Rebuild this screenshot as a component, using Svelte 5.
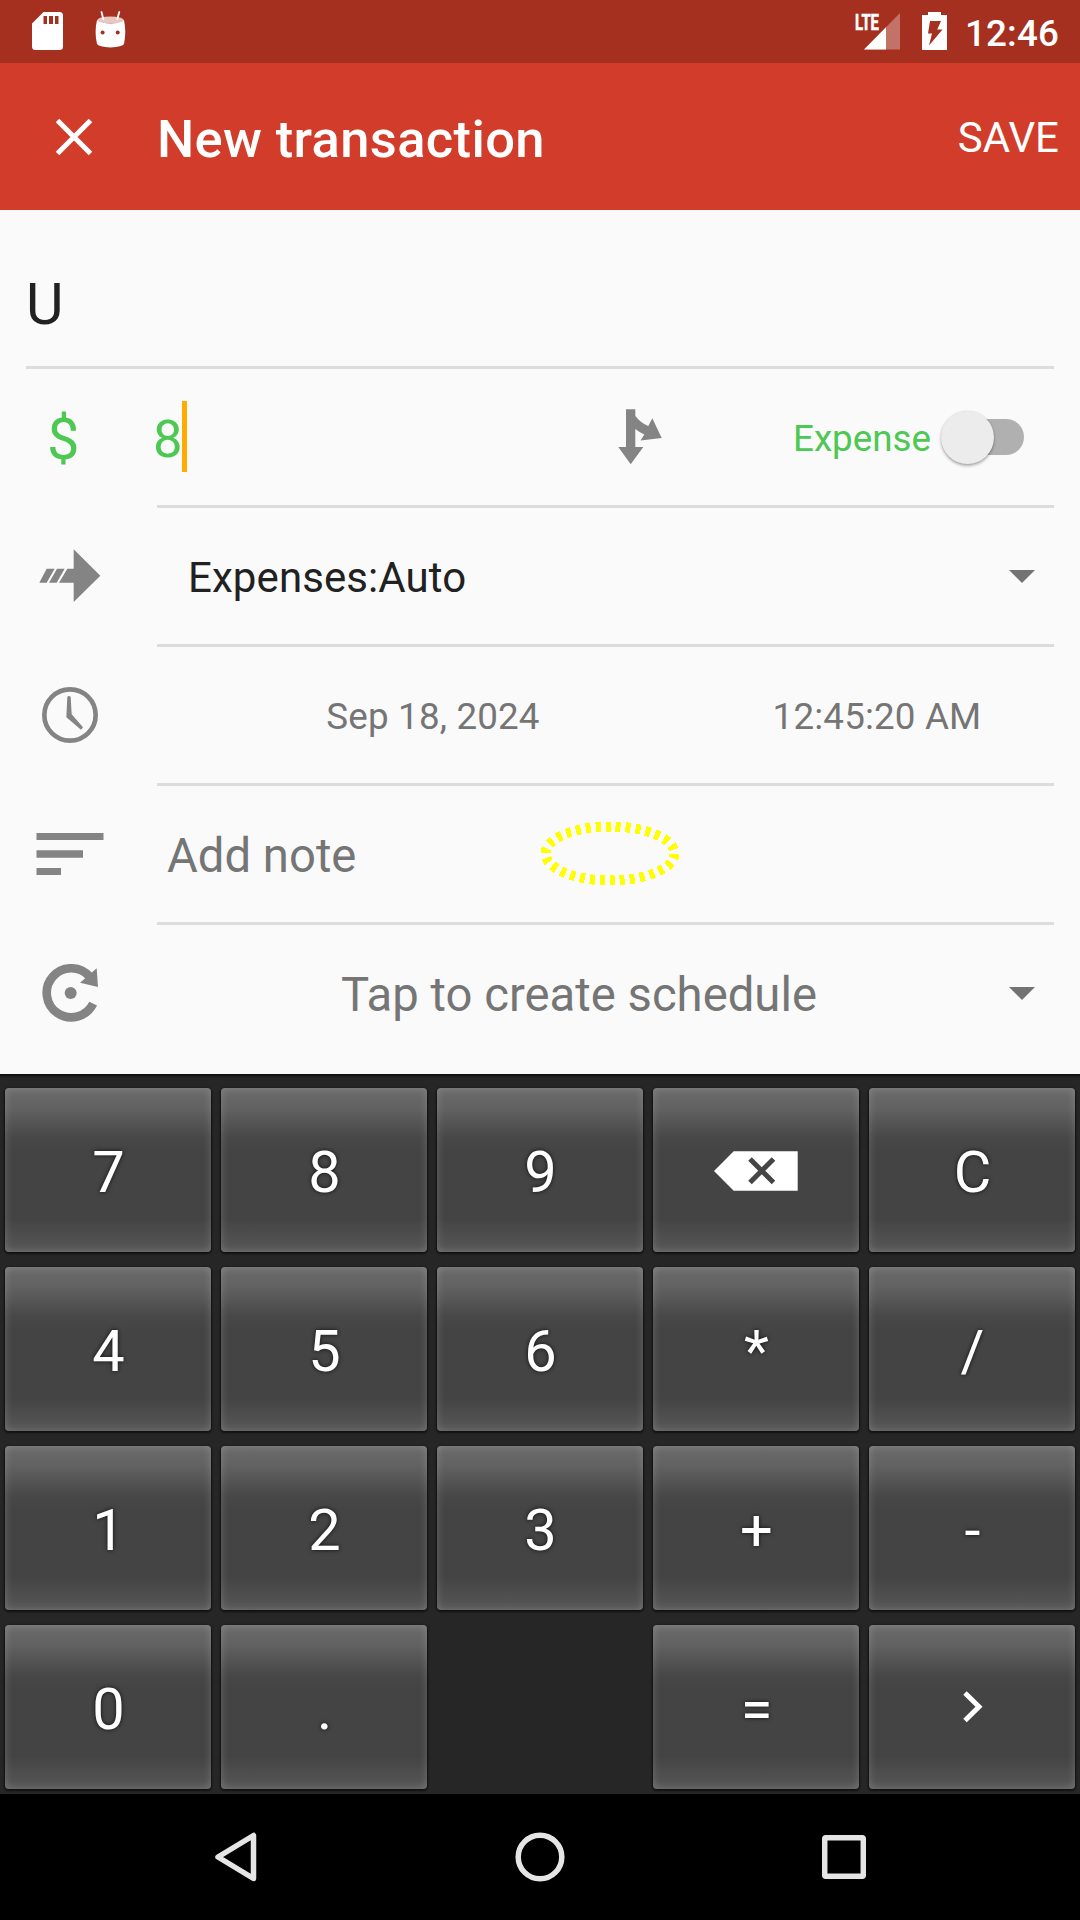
<script>
  const keys = ['7', '8', '9', 'back', 'C', '4', '5', '6', '*', '/', '1', '2', '3', '+', '-', '0', '.', '', '=', 'next'];
</script>

<div class="screen">
  <header class="status">
    <svg class="sd" width="31" height="38" viewBox="0 0 31 38">
      <path fill="#fff" fill-rule="evenodd" d="M11.5 0H27.500Q31 0 31 3.500V34.500Q31 38 27.500 38H3.500Q0 38 0 34.500V11.500ZM11.500 4V12H15V4ZM17 4V12H21V4ZM23 4V12H26.500V4Z" />
    </svg>
    <svg class="droid" width="31" height="37" viewBox="0 0 31 37">
      <path fill="#fff" d="M2 9Q15.500 16 29 9Q31.500 21 29 33Q27.500 35.500 15.500 36.500Q3.500 35.500 2 33Q-.800 21 2 9Z" />
      <ellipse cx="15.500" cy="9" rx="13" ry="3.600" fill="#e8c7c3" />
      <path d="M6.500 1L8.300 8M24.300 1L22.300 8" stroke="#fff" stroke-width="1.800" stroke-linecap="round" />
      <circle cx="7.600" cy="21.500" r="2" fill="#a53020" /><circle cx="22.700" cy="21.500" r="2" fill="#a53020" />
    </svg>
    <span class="spacer"></span>
    <svg class="signal" width="48" height="50" viewBox="-2 -12 48 50">
      <path d="M9 37.500L45 1V37.500Z" fill="#c37267" />
      <path d="M9 37.500L31 15.200V37.500Z" fill="#fff" />
      <text x="0" y="17.500" textLength="24" lengthAdjust="spacingAndGlyphs">LTE</text>
    </svg>
    <svg class="battery" width="25" height="38" viewBox="0 0 25 38">
      <path fill="#fff" fill-rule="evenodd" d="M6 0H19V3H25V38H0V3H6ZM8 9L6 21.500H10L7 33.500L20.500 17.500H15.200L19 9Z" />
    </svg>
    <span class="clock">12:46</span>
  </header>

  <div class="toolbar">
    <svg class="close" width="38" height="38" viewBox="0 0 38 38"><path d="M2.500 2.500L35.500 35.500M35.500 2.500L2.500 35.500" stroke="#fff" stroke-width="5" /></svg>
    <h1>New transaction</h1>
    <span class="spacer"></span>
    <span class="save">SAVE</span>
  </div>

  <main>
    <div class="row name"><span>U</span></div>
    <div class="row amount">
      <span class="currency">$</span>
      <span class="value">8</span><i class="caret"></i>
      <svg class="split" width="44" height="56" viewBox="0 0 44 56">
        <path fill="#848484" d="M8 .300H17.300V6.700Q22 13.500 30.300 17L34.300 9.300L43.700 29L22.500 31.500L26.300 25.500Q21 23 17.300 20V38H25.300L12.700 55.300L.300 38H8Z" />
      </svg>
      <span class="spacer"></span>
      <span class="kind">Expense</span>
      <span class="switch"><i></i></span>
    </div>
    <div class="row account">
      <svg width="62" height="54" viewBox="0 0 186 162">
        <path fill="#848484" d="M1 101L23 59H47L23 101ZM30 101L54 59H77L53 101ZM60 101L85 59H104V1L184 80L104 159V101Z" />
      </svg>
      <span>Expenses:Auto</span>
      <i class="drop"></i>
    </div>
    <div class="row when">
      <svg width="56" height="56" viewBox="0 0 168 168">
        <circle cx="84" cy="84" r="77" fill="none" stroke="#848484" stroke-width="14" />
        <path fill="#848484" d="M76 29Q80 25 86 29L89 82L123 121L117 128L73 91Z" />
      </svg>
      <span class="date">Sep 18, 2024</span>
      <span class="time">12:45:20 AM</span>
    </div>
    <div class="row note">
      <svg width="68" height="42" viewBox="0 0 68 42"><path fill="#848484" d="M.500 0H67.500V7H.500ZM.500 17.300H47V24.700H.500ZM.500 35H25V42H.500Z" /></svg>
      <span>Add note</span>
      <svg class="ring" width="140" height="66" viewBox="0 0 140 66" shape-rendering="crispEdges">
        <ellipse cx="70" cy="32.500" rx="64.500" ry="27" fill="none" stroke="#ff0" stroke-width="10" stroke-dasharray="5 5" />
      </svg>
    </div>
    <div class="row schedule">
      <svg width="58" height="58" viewBox="0 0 174 174">
        <path d="M153.500 119A73.500 73.500 0 1 1 143 38" fill="none" stroke="#848484" stroke-width="26" />
        <path fill="#848484" d="M164 13L168 69L114 56Z" /><circle cx="86" cy="87" r="18" fill="#848484" />
      </svg>
      <span>Tap to create schedule</span>
      <i class="drop"></i>
    </div>
  </main>

  <div class="keypad">
    {#each keys as key}
      {#if key === ''}
        <div></div>
      {:else}
        <div class="key">
          {#if key === 'back'}
            <svg class="erase" width="84" height="40" viewBox="0 0 84 40">
              <path d="M0 20L19.700 .300H83.700V39.700H19.700Z" fill="#fff" />
              <path d="M36 8L59.500 31.500M59.500 8L36 31.500" stroke="#454545" stroke-width="5" />
            </svg>
          {:else if key === 'next'}
            <svg class="chevron" width="20" height="32" viewBox="0 0 20 32"><path d="M2 2L16 15.700L2 29.500" fill="none" stroke="#fff" stroke-width="5" /></svg>
          {:else}
            <span>{key}</span>
          {/if}
        </div>
      {/if}
    {/each}
  </div>

  <nav>
    <svg width="44" height="50" viewBox="0 0 44 50"><path d="M4 25L39.500 3.500V46.500Z" /></svg>
    <svg width="50" height="50" viewBox="0 0 50 50"><circle cx="25" cy="25" r="21.800" /></svg>
    <svg width="44" height="44" viewBox="0 0 44 44"><rect x="2.700" y="2.700" width="38.600" height="38.600" rx="1" /></svg>
  </nav>
</div>

<style>
  :global(body) { margin: 0; }
  .screen { width: 1080px; height: 1920px; display: flex; flex-direction: column; overflow: hidden; background: #fafafa; font-family: Roboto, sans-serif; color: #212121; }
  .screen * { box-sizing: border-box; }
  span, h1 { white-space: nowrap; }
  svg { display: block; flex: none; }
  .spacer { flex: 1; }

  .status { height: 63px; flex: none; display: flex; align-items: flex-start; background: #a53020; color: #fff; padding: 12px 21px 0 32px; }
  .droid { margin: -1px 0 0 32px; }
  .signal { margin: -12px 21px 0 0; }
  .signal text { font: 700 22px Roboto, sans-serif; fill: #fff; stroke: #fff; stroke-width: .6px; }
  .battery { margin-right: 18px; }
  .clock { font-size: 36.75px; font-weight: 500; line-height: 43px; letter-spacing: .15px; }

  .toolbar { height: 147px; flex: none; display: flex; align-items: center; background: #d13d2a; color: #fff; padding: 0 21px 0 54.5px; }
  h1 { margin: 0 0 0 64.500px; font-size: 52.5px; font-weight: 500; line-height: 62px; letter-spacing: .35px; padding-top: 4px; }
  .save { font-size: 42px; line-height: 50px; padding-top: 2px; }

  main { height: 864px; flex: none; display: flex; flex-direction: column; }
  .row { height: 139px; flex: none; display: flex; align-items: center; margin: 0 26px 0 0; background: linear-gradient(#dcdcdc, #dcdcdc) 157px 100% / 100% 3px no-repeat; padding-bottom: 3px; }
  .name { height: 159px; background-position: 0 100%; margin-left: 26px; font-size: 57.75px; line-height: 68px; padding-top: 31px; }
  .schedule { height: 149px; background: none; padding-bottom: 13px; }
  .currency { width: 153px; padding: 4px 0 0 47px; font-size: 57.75px; line-height: 68px; color: #4dc853; }
  .value { width: 29px; padding-top: 4px; font-size: 52.5px; line-height: 62px; color: #4dc853; }
  .caret { width: 5px; height: 71px; margin-bottom: 2px; background: #ffab00; }
  .split { margin-left: 431px; }
  .kind { padding-top: 4px; font-size: 36.75px; line-height: 44px; color: #4dc853; }
  .switch { width: 83px; height: 36px; margin: 0 30px 0 10px; border-radius: 18px; display: flex; align-items: center; background: linear-gradient(90deg, transparent 30px, #b0b0b0 30px); }
  .switch i { width: 53px; height: 53px; flex: none; border-radius: 50%; background: #ececec; box-shadow: 0 2px 3px rgba(0, 0, 0, .3), 0 0 2px rgba(0, 0, 0, .12); }
  .drop { margin: 0 19px 0 auto; border: solid transparent; border-width: 13px 13px 0; border-top-color: #737373; }

  .account svg { margin-left: 39px; }
  .account span { margin-left: 87px; padding-top: 3px; font-size: 42px; line-height: 50px; letter-spacing: .08px; }
  .when { color: #757575; font-size: 36.75px; line-height: 44px; letter-spacing: .17px; }
  .when svg { margin-left: 42px; }
  .when span { padding-top: 3px; text-align: center; }
  .date { width: 444px; margin-left: 113px; }
  .time { width: 444px; margin-right: -45px; }
  .note { color: #757575; font-size: 47.25px; line-height: 56px; }
  .note svg { margin-left: 36px; }
  .note span { width: 373px; margin-left: 63px; padding-top: 4px; }
  .note .ring { margin-left: 0; }
  .schedule { color: #757575; font-size: 47.25px; line-height: 56px; }
  .schedule svg { margin-left: 42px; }
  .schedule span { margin-left: 241px; padding-top: 4px; }

  .keypad { height: 720px; flex: none; display: grid; grid-template-columns: repeat(5, 206px); grid-auto-rows: 164px; gap: 15px 10px; padding: 14px 5px 0; background: linear-gradient(#0c0c0c, #262626 4px); }
  .key { display: flex; align-items: center; justify-content: center; border-radius: 4px; color: #fff; font-size: 57.75px; line-height: 68px; background: linear-gradient(#6b6b6b, #626262 12%, #484848 30%, #444 38%, #444 80%, #575757); box-shadow: inset 0 0 8px rgba(255, 255, 255, .2), 0 1px 2px 1px #101010; }
  .key span { padding: 3px 0 0 1px; text-shadow: 0 0 4px rgba(0, 0, 0, .8); }
  .erase { margin-top: 2px; }
  .chevron { margin-left: 1px; }

  nav { height: 126px; flex: none; display: flex; align-items: center; justify-content: space-between; padding: 0 214px 0 214px; background: #000; }
  nav path, nav circle, nav rect { fill: none; stroke: #e5e5e5; stroke-width: 5.500px; stroke-linejoin: round; }
</style>
